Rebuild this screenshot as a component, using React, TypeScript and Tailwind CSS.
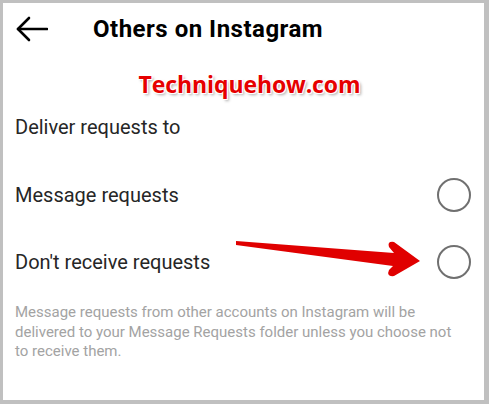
function Radio() {
  return <span className="block h-[34px] w-[34px] rounded-full border-[2.5px] border-[#707070]" />;
}

function OptionRow({ label, height }: { label: string; height: string }) {
  return (
    <div className={`flex items-center justify-between pl-[12px] pr-[13px] ${height}`}>
      <span className="text-[20px] leading-none text-[#262626]">{label}</span>
      <Radio />
    </div>
  );
}

export default function App() {
  return (
    <div className="h-[404px] w-[489px] bg-[#c0c0c0] pb-[4px] pl-[3px] pr-[5px] pt-[3px] font-['Roboto',sans-serif]">
      <div className="relative flex h-full flex-col bg-white">
        <div className="flex h-[52px] items-center pl-[13px]">
          <svg width="32" height="26" viewBox="0 0 32 26" fill="none" stroke="#000" strokeWidth="2.6" strokeLinecap="round" strokeLinejoin="round">
            <path d="M2 13 H31" />
            <path d="M13 2 L2 13 L13 24" />
          </svg>
          <h1 className="ml-[45px] text-[24px] font-bold leading-none tracking-[0.5px] text-black">Others on Instagram</h1>
        </div>

        <div className="flex h-[58px] items-center justify-center pl-[12px]">
          <span className="font-['Open_Sans',sans-serif] text-[23px] font-bold leading-none tracking-[-0.1px] text-[#e60000] [text-shadow:1px_1px_0_#fff,-1px_-1px_0_#fff,1px_-1px_0_#fff,-1px_1px_0_#fff,2px_2px_3px_rgba(0,0,0,0.35)]">
            Techniquehow.com
          </span>
        </div>

        <div className="flex h-[28px] items-center pl-[12px]">
          <span className="text-[20px] leading-none text-[#262626]">Deliver requests to</span>
        </div>

        <div className="mt-[20px]">
          <OptionRow label="Message requests" height="h-[68px]" />
          <OptionRow label="Don't receive requests" height="h-[66px]" />
        </div>

        <p className="mt-[8px] pl-[12px] pr-[20px] text-[15px] leading-[19.5px] text-[#a3a3a3]">
          Message requests from other accounts on Instagram will be delivered to your Message Requests folder unless you choose not to receive them.
        </p>

        <svg className="pointer-events-none absolute left-0 top-0" width="481" height="397" viewBox="3 3 481 397">
          <path
            d="M236,241 L394,253 L389,247 Q387,241 394,242 L420,261 L394,276 Q386,277 389,270 L393,266 L236,245 Z"
            fill="#e00000"
          />
        </svg>
      </div>
    </div>
  );
}
